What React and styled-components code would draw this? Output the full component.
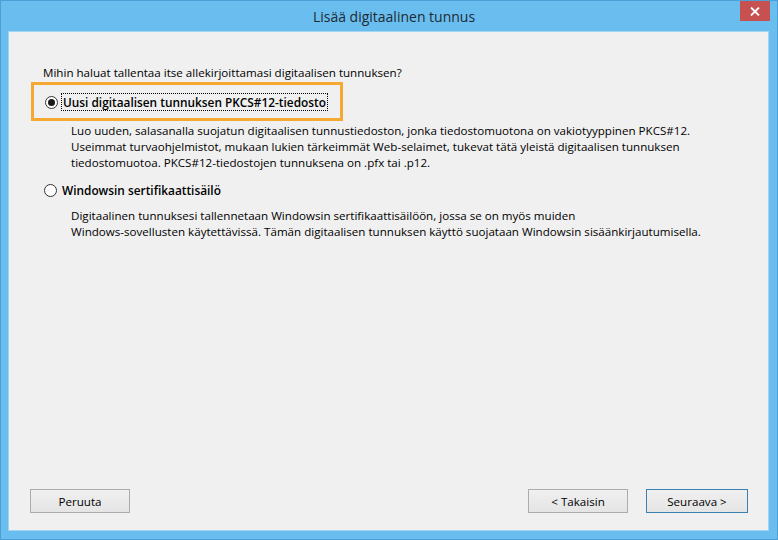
import React from "react";
import styled, { createGlobalStyle } from "styled-components";

const GlobalStyle = createGlobalStyle`
  html, body {
    margin: 0;
    padding: 0;
    background: #6abeef;
  }
  * { box-sizing: border-box; }
`;

const FONT = `"Open Sans", "Noto Sans", "DejaVu Sans", sans-serif`;

const App = () => {
  return (
    <>
      <GlobalStyle />
      <Window>
        <TitleBar>
          <span />
          <Title>Lisää digitaalinen tunnus</Title>
          <CloseButton aria-label="Sulje">
            <svg width="10" height="9" viewBox="0 0 10 9">
              <path d="M1 0.5 L9 8.5 M9 0.5 L1 8.5" stroke="#fff" strokeWidth="1.8" />
            </svg>
          </CloseButton>
        </TitleBar>
        <Client>
          <Content>
            <Question>Mihin haluat tallentaa itse allekirjoittamasi digitaalisen tunnuksen?</Question>

            <Highlight>
              <OptionRow>
                <Radio checked />
                <Label focused>Uusi digitaalisen tunnuksen PKCS#12-tiedosto</Label>
              </OptionRow>
            </Highlight>
            <Description top={2}>
              Luo uuden, salasanalla suojatun digitaalisen tunnustiedoston, jonka tiedostomuotona on vakiotyyppinen PKCS#12.
              <br />
              Useimmat turvaohjelmistot, mukaan lukien tärkeimmät Web-selaimet, tukevat tätä yleistä digitaalisen tunnuksen
              <br />
              tiedostomuotoa. PKCS#12-tiedostojen tunnuksena on .pfx tai .p12.
            </Description>

            <OptionRow top={10}>
              <Radio />
              <Label>Windowsin sertifikaattisäilö</Label>
            </OptionRow>
            <Description top={9}>
              Digitaalinen tunnuksesi tallennetaan Windowsin sertifikaattisäilöön, jossa se on myös muiden
              <br />
              Windows-sovellusten käytettävissä. Tämän digitaalisen tunnuksen käyttö suojataan Windowsin sisäänkirjautumisella.
            </Description>
          </Content>

          <Footer>
            <Button>Peruuta</Button>
            <ButtonGroup>
              <Button>&lt; Takaisin</Button>
              <Button primary>Seuraava &gt;</Button>
            </ButtonGroup>
          </Footer>
        </Client>
      </Window>
    </>
  );
};

export default App;

const Window = styled.div`
  width: 778px;
  height: 540px;
  background: #6abeef;
  border: 1px solid #4c9fd7;
  display: flex;
  flex-direction: column;
  font-family: ${FONT};
  color: #000;
`;

const TitleBar = styled.div`
  height: 30px;
  display: grid;
  grid-template-columns: 1fr auto 1fr;
  align-items: start;
`;

const Title = styled.div`
  font-size: 14px;
  line-height: 30px;
  color: #1e2a33;
  padding: 1px 0 0 10px;
`;

const CloseButton = styled.div`
  justify-self: end;
  margin-right: 7px;
  width: 30px;
  height: 20px;
  background: #c75050;
  display: flex;
  align-items: center;
  justify-content: center;
`;

const Client = styled.div`
  flex: 1;
  margin: 0 8px 8px 7px;
  background: #f0f0f0;
  border: 1px solid #a2d5f4;
  display: flex;
  flex-direction: column;
`;

const Content = styled.div`
  padding: 33px 0 0 34px;
  display: flex;
  flex-direction: column;
  align-items: flex-start;
  font-size: 11.6px;
`;

const Question = styled.div`
  line-height: 16px;
  height: 16px;
`;

const Highlight = styled.div`
  margin: 1px 0 0 -12px;
  padding: 8px 12px 7px 10px;
  border: 3px solid #f5a832;
`;

const OptionRow = styled.div`
  display: flex;
  align-items: center;
  gap: 3px;
  height: 18px;
  margin-top: ${(p) => p.top || 0}px;
  padding-left: 1px;
`;

const Radio = styled.span`
  width: 13px;
  height: 13px;
  border-radius: 50%;
  border: 1px solid #333;
  background: #fff;
  display: flex;
  align-items: center;
  justify-content: center;
  &::after {
    content: "";
    display: ${(p) => (p.checked ? "block" : "none")};
    width: 7px;
    height: 7px;
    border-radius: 50%;
    background: #1a1a1a;
  }
`;

const Label = styled.span`
  font-weight: 600;
  font-size: 11.85px;
  line-height: 16px;
  padding: 0 1px;
  border: 1px dotted ${(p) => (p.focused ? "#000" : "transparent")};
`;

const Description = styled.div`
  margin-top: ${(p) => p.top || 0}px;
  padding-left: 28px;
  line-height: 16px;
  white-space: nowrap;
`;

const Footer = styled.div`
  margin-top: auto;
  padding: 0 20px 17px 21px;
  display: flex;
  justify-content: space-between;
`;

const ButtonGroup = styled.div`
  display: flex;
  gap: 18px;
`;

const Button = styled.button`
  width: ${(p) => (p.primary ? 102 : 100)}px;
  height: 24px;
  font-family: ${FONT};
  font-size: 11.6px;
  color: #000;
  background: linear-gradient(#f0f0f0, #e5e5e5);
  border: 1px solid ${(p) => (p.primary ? "#3c7fb1" : "#acacac")};
  border-radius: 0;
  padding: 0;
`;
